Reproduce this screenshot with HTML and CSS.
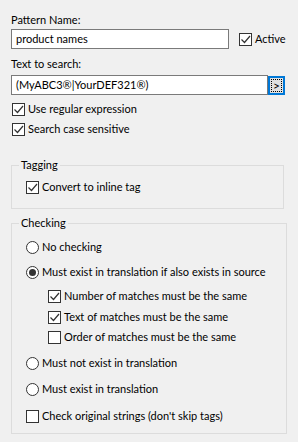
FILE: index.html
```html
<!DOCTYPE html>
<html lang="en">
  <head>
    <meta charset="UTF-8" />
    <title>Pattern</title>
    <link rel="stylesheet" href="styles.css">
  </head>
  <body>
    <div class="label first">Pattern Name:</div>
    <div class="line">
      <div class="tekst navn">product names</div>
      <label class="valg aktiv"><span class="boks tjek"></span>Active</label>
    </div>

    <div class="label anden">Text to search:</div>
    <div class="line soeg">
      <div class="tekst bred">(MyABC3®|YourDEF321®)</div>
      <button class="pil"><span>&gt;</span></button>
    </div>

    <label class="valg regex"><span class="boks tjek"></span>Use regular expression</label>
    <label class="valg case"><span class="boks tjek"></span>Search case sensitive</label>

    <fieldset class="gruppe tagging">
      <legend>Tagging</legend>
      <label class="valg"><span class="boks tjek"></span>Convert to inline tag</label>
    </fieldset>

    <fieldset class="gruppe checking">
      <legend>Checking</legend>
      <label class="valg r1"><span class="radio"></span>No checking</label>
      <label class="valg r2"><span class="radio valgt"></span>Must exist in translation if also exists in source</label>
      <label class="valg under r3"><span class="boks tjek"></span>Number of matches must be the same</label>
      <label class="valg under r4"><span class="boks tjek"></span>Text of matches must be the same</label>
      <label class="valg under r5"><span class="boks"></span>Order of matches must be the same</label>
      <label class="valg r6"><span class="radio"></span>Must not exist in translation</label>
      <label class="valg r7"><span class="radio"></span>Must exist in translation</label>
      <label class="valg r8"><span class="boks"></span>Check original strings (don't skip tags)</label>
    </fieldset>
  </body>
</html>
```

FILE: styles.css
```css
body {
  margin: 0;
  padding: 12px 0 0 11px;
  background-color: #f0f0f0;
  font-family: Lato, sans-serif;
  font-size: 11px;
  line-height: 16px;
  color: #000;
}

.label {
  height: 16px;
}
.anden {
  margin-top: 7px;
}

.line {
  display: flex;
  align-items: center;
  margin-top: 1px;
}
.soeg {
  margin-top: 3px;
}

.tekst {
  box-sizing: border-box;
  height: 20px;
  padding: 1px 4px;
  background-color: #fff;
  border: 1px solid #7a7a7a;
  white-space: nowrap;
}
.navn {
  width: 218px;
}
.bred {
  width: 257px;
}

.pil {
  box-sizing: border-box;
  width: 17px;
  height: 19px;
  padding: 1px;
  border: 2px solid #0078d7;
  background-color: #e1e1e1;
  font: inherit;
  display: flex;
}
.pil span {
  flex: 1;
  border: 1px dotted #000;
  font-size: 12px;
  line-height: 11px;
}

.valg {
  display: flex;
  align-items: center;
  gap: 3px;
  height: 16px;
  white-space: nowrap;
}
.aktiv {
  margin-left: 10px;
}
.regex {
  margin-top: 6px;
  margin-left: 1px;
}
.case {
  margin-top: 4px;
  margin-left: 1px;
}

.boks {
  box-sizing: border-box;
  width: 13px;
  height: 13px;
  flex: none;
  background-color: #fff;
  border: 1px solid #333;
}
.tjek {
  background: #fff url("data:image/svg+xml,%3Csvg xmlns='http://www.w3.org/2000/svg' width='11' height='11'%3E%3Cpath d='M1.5 5.5l3 3 5.5-6.5' fill='none' stroke='%23333' stroke-width='1.2'/%3E%3C/svg%3E") no-repeat center;
}

.radio {
  box-sizing: border-box;
  width: 13px;
  height: 13px;
  flex: none;
  border-radius: 50%;
  background-color: #fff;
  border: 1px solid #333;
  display: flex;
  align-items: center;
  justify-content: center;
}
.valgt::after {
  content: "";
  width: 7px;
  height: 7px;
  border-radius: 50%;
  background-color: #333;
}

.gruppe {
  margin: 0;
  min-width: 0;
  padding: 0 0 0 14px;
  border: 1px solid #dcdcdc;
}
.gruppe legend {
  margin-left: -7px;
  padding: 0 2px;
  line-height: 16px;
}
.tagging {
  width: 273px;
  box-sizing: border-box;
  margin-top: 20px;
  padding-top: 6px;
  padding-bottom: 13px;
}
.checking {
  width: 276px;
  box-sizing: border-box;
  margin-top: 6px;
  padding-top: 8px;
  padding-bottom: 9px;
}

.under {
  margin-left: 22px;
}
.r2 { margin-top: 9px; }
.r3 { margin-top: 8px; }
.r4 { margin-top: 5px; }
.r5 { margin-top: 4px; }
.r6 { margin-top: 10px; }
.r7 { margin-top: 10px; }
.r8 { margin-top: 11px; }
```
